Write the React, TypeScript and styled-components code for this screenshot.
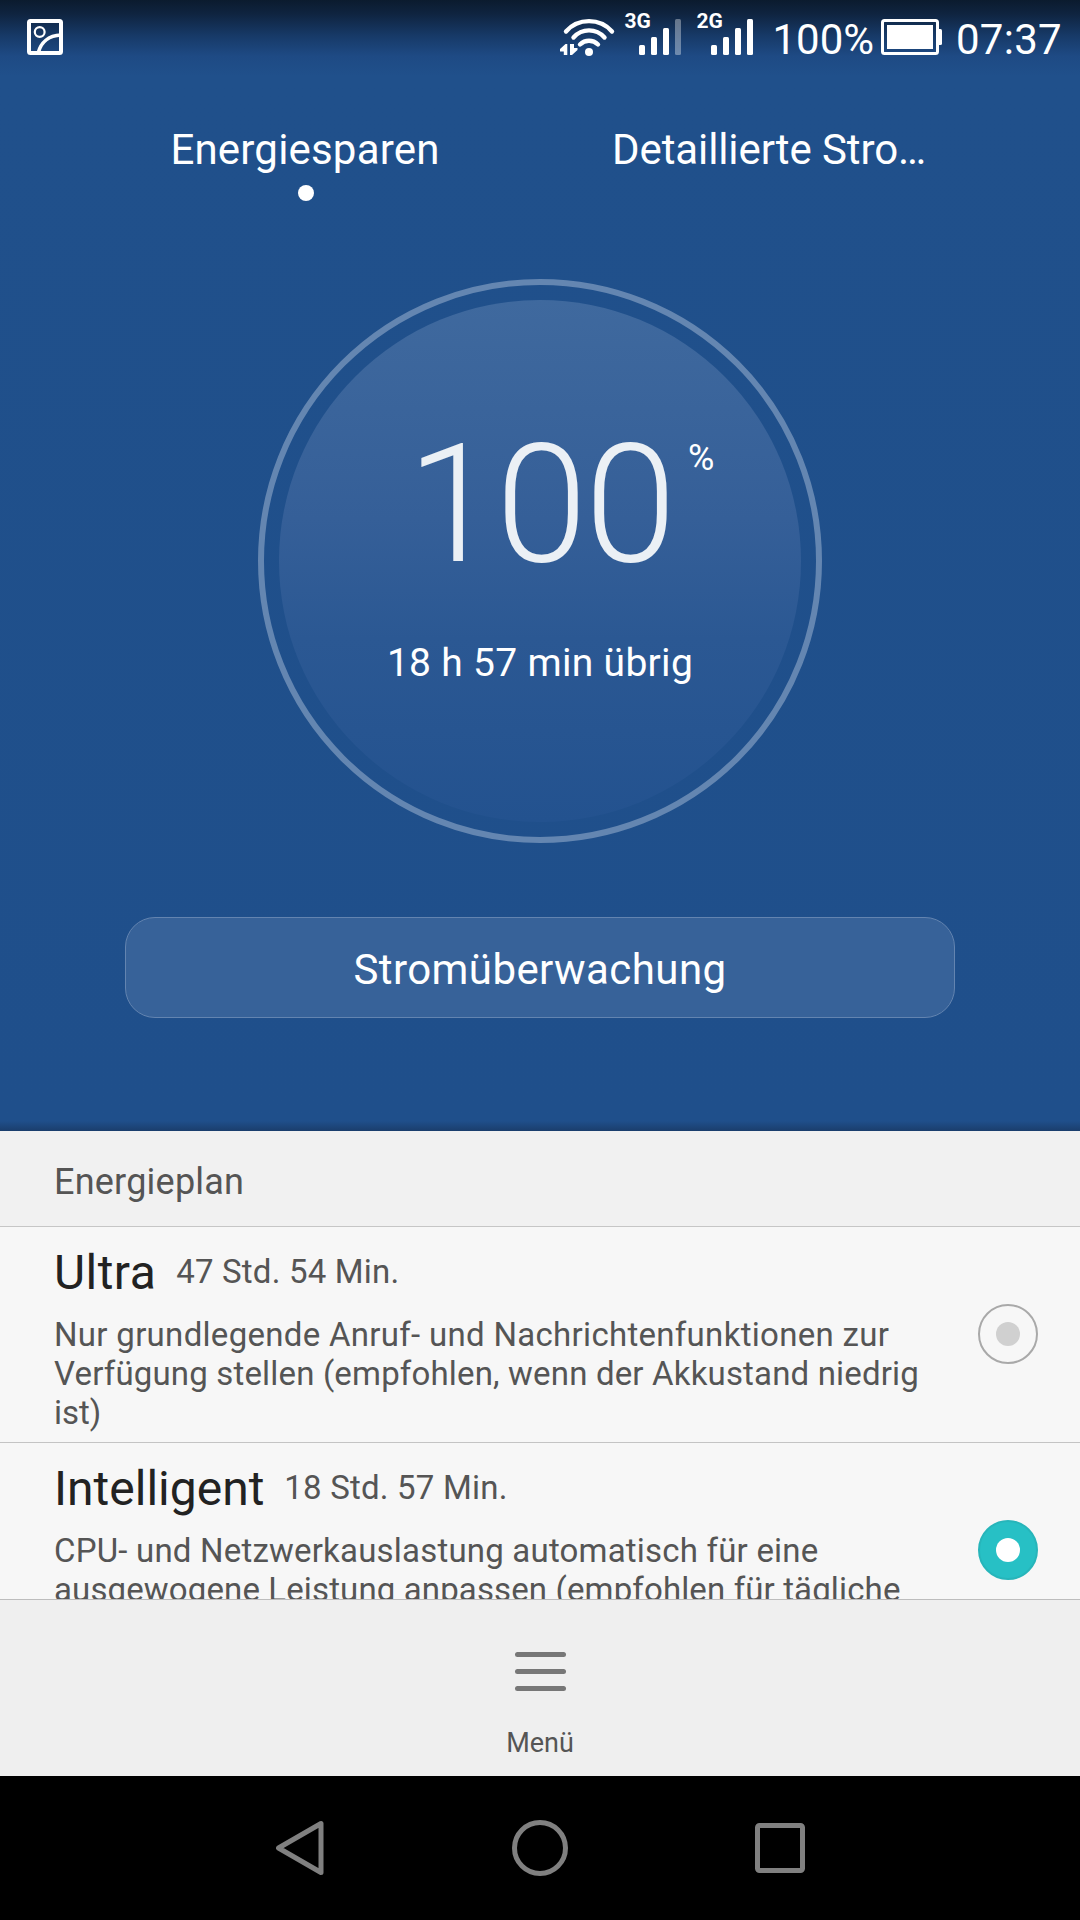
import React from "react";
import styled, { createGlobalStyle } from "styled-components";

const Global = createGlobalStyle`
  * { box-sizing: border-box; }
  body {
    margin: 0;
    background: #000;
    font-family: Roboto, "Noto Sans", sans-serif;
    color: #fff;
  }
`;

const Screen = styled.div`
  width: 1080px;
  height: 1920px;
  display: flex;
  flex-direction: column;
  overflow: hidden;
`;

const Hero = styled.section`
  height: 1131px;
  flex: none;
  display: flex;
  flex-direction: column;
  align-items: center;
  background:
    linear-gradient(to top, rgba(20, 40, 70, 0.45), rgba(20, 40, 70, 0) 10px),
    linear-gradient(#0b1b2e 0, #0f2440 14px, #173a68 36px, #1e4a84 56px, #20508b 76px, #1f4f8b 100%);
`;

const StatusBar = styled.header`
  width: 100%;
  height: 75px;
  padding: 0 19px 0 27px;
  display: flex;
  align-items: flex-start;
`;

const Spacer = styled.div`
  flex: 1;
`;

const StatusIcon = styled.svg<{ $gap?: number }>`
  display: block;
  flex: none;
  margin-left: ${(p) => p.$gap ?? 0}px;
`;

const Signal = styled.div<{ $gap: number }>`
  width: 58px;
  height: 56px;
  flex: none;
  margin-left: ${(p) => p.$gap}px;
  display: flex;
  align-items: flex-end;
  position: relative;
`;

const NetType = styled.span`
  position: absolute;
  left: -0.5px;
  top: 9px;
  font-size: 21px;
  line-height: 24px;
  font-weight: 700;
`;

const Bars = styled.div`
  display: flex;
  align-items: flex-end;
  gap: 6px;
  margin: 0 0 1px 14px;
`;

const Bar = styled.i<{ $h: number; $dim?: boolean }>`
  width: 6px;
  height: ${(p) => p.$h}px;
  border-radius: 1.5px;
  background: ${(p) => (p.$dim ? "rgba(255,255,255,0.36)" : "#fff")};
`;

const StatusText = styled.span<{ $w: number; $gap: number; $spacing?: number }>`
  width: ${(p) => p.$w}px;
  margin-left: ${(p) => p.$gap}px;
  padding-top: 15px;
  font-size: 42px;
  line-height: 50px;
  letter-spacing: ${(p) => p.$spacing ?? 0}px;
  white-space: nowrap;
`;

const Tabs = styled.nav`
  width: 100%;
  padding: 50px 78px 0 74px;
  display: grid;
  grid-template-columns: 1fr 1fr;
`;

const Tab = styled.div<{ $spacing: number }>`
  height: 76px;
  display: flex;
  flex-direction: column;
  align-items: center;
  gap: 10px;
  font-size: 42px;
  line-height: 50px;
  letter-spacing: ${(p) => p.$spacing}px;
  white-space: nowrap;
`;

const TabLabel = styled.span`
  margin-left: -2px;
`;

const Dot = styled.i`
  width: 16px;
  height: 16px;
  border-radius: 50%;
  background: #fff;
`;

const Ring = styled.div`
  width: 564px;
  height: 564px;
  margin-top: 78px;
  padding: 15px;
  border: 6px solid #6486b1;
  border-radius: 50%;
`;

const Disc = styled.div`
  width: 522px;
  height: 522px;
  border-radius: 50%;
  background: linear-gradient(#3f699e, #355f98 42%, #2b5893 65%, #23528f);
  display: flex;
  flex-direction: column;
  align-items: center;
`;

const Charge = styled.div`
  width: 100%;
  padding: 106px 0 0 128px;
  display: flex;
  align-items: flex-start;
`;

const ChargeValue = styled.span`
  width: 273px;
  font-size: 165px;
  line-height: 197px;
  font-weight: 300;
  letter-spacing: -2.7px;
  color: #ebf0f5;
`;

const ChargeUnit = styled.span`
  margin-top: 31px;
  margin-left: 8px;
  font-size: 36px;
  line-height: 42px;
`;

const Remaining = styled.div`
  margin-top: 37px;
  font-size: 39px;
  line-height: 46px;
  letter-spacing: 0.3px;
  white-space: nowrap;
`;

const MonitorButton = styled.button`
  width: 830px;
  height: 101px;
  margin-top: 74px;
  padding: 4px 0 0;
  border: 1px solid #6384b0;
  border-radius: 30px;
  background: #376299;
  color: #fff;
  font-family: inherit;
  font-size: 42px;
  line-height: 50px;
  letter-spacing: 0.42px;
`;

const PlanHeader = styled.h2`
  flex: none;
  height: 96px;
  margin: 0;
  padding: 30px 54px 0;
  border-bottom: 1px solid #c6c6c6;
  background: #f1f1f1;
  color: #555;
  font-size: 36px;
  font-weight: 400;
  line-height: 42px;
  letter-spacing: 0.22px;
`;

const PlanList = styled.div`
  height: 372px;
  flex: none;
  overflow: hidden;
  background: #f7f7f7;
`;

const Plan = styled.div`
  height: 216px;
  padding: 0 42px 0 54px;
  display: flex;
  align-items: center;
  justify-content: space-between;
  border-bottom: 1px solid #c4c4c4;
`;

const PlanBody = styled.div`
  height: 215px;
  padding-top: 17px;
`;

const PlanTitle = styled.div`
  display: flex;
  align-items: center;
  height: 58px;
`;

const PlanName = styled.span<{ $spacing: number }>`
  font-size: 48px;
  line-height: 56px;
  letter-spacing: ${(p) => p.$spacing}px;
  color: #222;
`;

const PlanTime = styled.span`
  margin: 0 0 2px 20px;
  font-size: 33px;
  line-height: 38px;
  letter-spacing: 0.2px;
  color: #555;
`;

const PlanText = styled.p`
  margin: 13px 0 0;
  font-size: 33px;
  line-height: 39px;
  color: #555;
`;

const PlanLine = styled.span<{ $spacing: number }>`
  display: block;
  letter-spacing: ${(p) => p.$spacing}px;
  white-space: nowrap;
`;

const Radio = styled.span<{ $on?: boolean }>`
  width: 60px;
  height: 60px;
  flex: none;
  margin-bottom: 1px;
  display: grid;
  place-items: center;
  border: 2px solid ${(p) => (p.$on ? "#27b5ba" : "#a9a9a9")};
  border-radius: 50%;
  background: ${(p) => (p.$on ? "#27c0c5" : "transparent")};

  &::after {
    content: "";
    width: 24px;
    height: 24px;
    border-radius: 50%;
    background: ${(p) => (p.$on ? "#fff" : "#d0d0d0")};
  }
`;

const BottomBar = styled.footer`
  height: 177px;
  flex: none;
  padding-top: 52px;
  border-top: 1px solid #bdbdbd;
  background: #efefef;
  display: flex;
  flex-direction: column;
  align-items: center;
`;

const MenuIcon = styled.div`
  width: 51px;
  display: grid;
  gap: 12px;

  i {
    height: 5px;
    border-radius: 2.5px;
    background: #777;
  }
`;

const MenuLabel = styled.span`
  margin-top: 36px;
  font-size: 27px;
  line-height: 32px;
  color: #555;
`;

const NavBar = styled.div`
  height: 144px;
  flex: none;
  background: #000;
  display: flex;
  align-items: center;
  justify-content: center;
`;

const NavIcon = styled.svg<{ $gap?: number }>`
  display: block;
  margin-left: ${(p) => p.$gap ?? 0}px;
`;

const SignalBlock = ({ type, gap, dim }: { type: string; gap: number; dim?: boolean }) => (
  <Signal $gap={gap}>
    <NetType>{type}</NetType>
    <Bars>
      <Bar $h={10} />
      <Bar $h={18} />
      <Bar $h={27} />
      <Bar $h={36} $dim={dim} />
    </Bars>
  </Signal>
);

const plans = [
  {
    name: "Ultra",
    spacing: 0.45,
    time: "47 Std. 54 Min.",
    on: false,
    lines: [
      { text: "Nur grundlegende Anruf- und Nachrichtenfunktionen zur", spacing: 0.3 },
      { text: "Verfügung stellen (empfohlen, wenn der Akkustand niedrig", spacing: 0.17 },
      { text: "ist)", spacing: 0 },
    ],
  },
  {
    name: "Intelligent",
    spacing: 0,
    time: "18 Std. 57 Min.",
    on: true,
    lines: [
      { text: "CPU- und Netzwerkauslastung automatisch für eine", spacing: 0.2 },
      { text: "ausgewogene Leistung anpassen (empfohlen für tägliche", spacing: 0.13 },
    ],
  },
];

export default function App() {
  return (
    <>
      <Global />
      <Screen>
        <Hero>
          <StatusBar>
            <StatusIcon width="36" height="56" viewBox="0 0 36 56" fill="none" stroke="#fff">
              <rect x="2" y="21" width="32" height="32" rx="1.5" strokeWidth="4" />
              <circle cx="12.7" cy="32" r="4.9" strokeWidth="2.2" />
              <path d="M11.5 52C14 43 21 35.5 34 35" strokeWidth="3.6" />
            </StatusIcon>
            <Spacer />
            <StatusIcon width="56" height="58" viewBox="0 0 56 58" fill="none" stroke="#fff" strokeLinecap="round">
              <path d="M6 31.5C18 17.7 40 17.7 52 31.5" strokeWidth="4.4" />
              <path d="M13.5 37.5C22 28 36 28 44.5 37.5" strokeWidth="4.4" />
              <path d="M20 44.5C25 39.5 33 39.5 38 44.5" strokeWidth="4.4" />
              <circle cx="29" cy="52" r="4" fill="#fff" stroke="none" />
              <path d="M7.3 44V55H3.8V51.5H0V49L5.5 44ZM10 44H14V48H17.5V50L12 55H10Z" fill="#fff" stroke="none" />
            </StatusIcon>
            <SignalBlock type="3G" gap={9} dim />
            <SignalBlock type="2G" gap={14} />
            <StatusText $gap={17.5} $w={105.5}>100%</StatusText>
            <StatusIcon $gap={3} width="61" height="56" viewBox="0 0 61 56">
              <rect x="1.5" y="20.5" width="55" height="33" rx="2" fill="none" stroke="#fff" strokeWidth="3" />
              <rect x="6" y="25" width="46" height="24" fill="#fff" />
              <path d="M57 29h2.5q1.5 0 1.5 1.5v13q0 1.5-1.5 1.5H57z" fill="#fff" />
            </StatusIcon>
            <StatusText $gap={14} $w={105} $spacing={0.25}>07:37</StatusText>
          </StatusBar>
          <Tabs>
            <Tab $spacing={0.19}>
              <TabLabel>Energiesparen</TabLabel>
              <Dot />
            </Tab>
            <Tab $spacing={-0.1}>
              <TabLabel>Detaillierte Stro…</TabLabel>
            </Tab>
          </Tabs>
          <Ring>
            <Disc>
              <Charge>
                <ChargeValue>100</ChargeValue>
                <ChargeUnit>%</ChargeUnit>
              </Charge>
              <Remaining>18 h 57 min übrig</Remaining>
            </Disc>
          </Ring>
          <MonitorButton>Stromüberwachung</MonitorButton>
        </Hero>
        <PlanHeader>Energieplan</PlanHeader>
        <PlanList>
          {plans.map((p) => (
            <Plan key={p.name}>
              <PlanBody>
                <PlanTitle>
                  <PlanName $spacing={p.spacing}>{p.name}</PlanName>
                  <PlanTime>{p.time}</PlanTime>
                </PlanTitle>
                <PlanText>
                  {p.lines.map((l) => (
                    <PlanLine key={l.text} $spacing={l.spacing}>
                      {l.text}
                    </PlanLine>
                  ))}
                </PlanText>
              </PlanBody>
              <Radio $on={p.on} />
            </Plan>
          ))}
        </PlanList>
        <BottomBar>
          <MenuIcon>
            <i />
            <i />
            <i />
          </MenuIcon>
          <MenuLabel>Menü</MenuLabel>
        </BottomBar>
        <NavBar>
          <NavIcon width="48" height="56" viewBox="0 0 48 56" fill="none" stroke="#808080" strokeWidth="5" strokeLinejoin="round">
            <path d="M2.5 28L45 3.5V52.5Z" />
          </NavIcon>
          <NavIcon $gap={188} width="56" height="56" viewBox="0 0 56 56" fill="none" stroke="#808080" strokeWidth="5">
            <circle cx="28" cy="28" r="25.5" />
          </NavIcon>
          <NavIcon $gap={187} width="50" height="50" viewBox="0 0 50 50" fill="none" stroke="#808080" strokeWidth="5">
            <rect x="2.5" y="2.5" width="45" height="45" rx="2" />
          </NavIcon>
        </NavBar>
      </Screen>
    </>
  );
}
